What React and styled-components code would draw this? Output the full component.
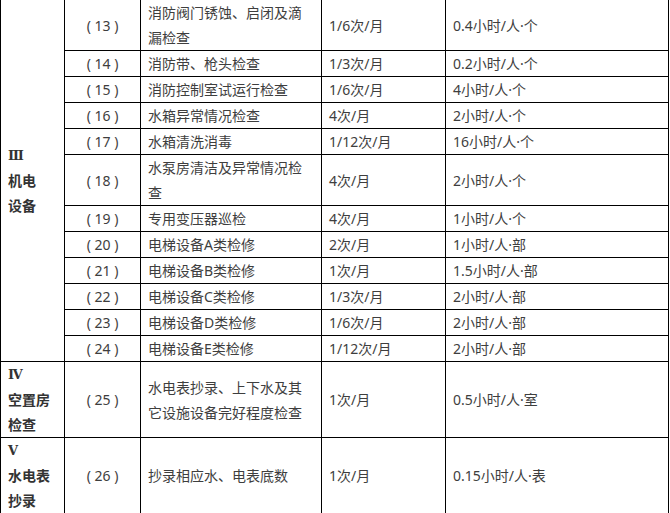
import styled, { createGlobalStyle } from "styled-components";

const GlobalStyle = createGlobalStyle`
  html, body {
    margin: 0;
    padding: 0;
    background: #fff;
  }
  body {
    font-family: "Noto Sans", "Noto Sans CJK SC", sans-serif;
    font-size: 14px;
    color: #3e3e3e;
  }
`;

const groups = [
  {
    title: ["Ⅲ", "机电", "设备"],
    rows: [
      ["13", "消防阀门锈蚀、启闭及滴漏检查", "1/6次/月", "0.4小时/人·个"],
      ["14", "消防带、枪头检查", "1/3次/月", "0.2小时/人·个"],
      ["15", "消防控制室试运行检查", "1/6次/月", "4小时/人·个"],
      ["16", "水箱异常情况检查", "4次/月", "2小时/人·个"],
      ["17", "水箱清洗消毒", "1/12次/月", "16小时/人·个"],
      ["18", "水泵房清洁及异常情况检查", "4次/月", "2小时/人·个"],
      ["19", "专用变压器巡检", "4次/月", "1小时/人·个"],
      ["20", "电梯设备A类检修", "2次/月", "1小时/人·部"],
      ["21", "电梯设备B类检修", "1次/月", "1.5小时/人·部"],
      ["22", "电梯设备C类检修", "1/3次/月", "2小时/人·部"],
      ["23", "电梯设备D类检修", "1/6次/月", "2小时/人·部"],
      ["24", "电梯设备E类检修", "1/12次/月", "2小时/人·部"],
    ],
  },
  {
    title: ["Ⅳ", "空置房", "检查"],
    rows: [["25", "水电表抄录、上下水及其它设施设备完好程度检查", "1次/月", "0.5小时/人·室"]],
  },
  {
    title: ["Ⅴ", "水电表", "抄录"],
    rows: [["26", "抄录相应水、电表底数", "1次/月", "0.15小时/人·表"]],
  },
];

const widths = [64, 76, 181, 124, 223];

function App() {
  return (
    <>
      <GlobalStyle />
      <Sheet>
        <colgroup>
          {widths.map((w, i) => (
            <col key={i} style={{ width: w }} />
          ))}
        </colgroup>
        <tbody>
          {groups.map((g) =>
            g.rows.map((r, i) => (
              <tr key={r[0]}>
                {i === 0 && (
                  <Cell rowSpan={g.rows.length} $bold>
                    <Numeral>{g.title[0]}</Numeral>
                    {g.title.slice(1).map((t) => (
                      <div key={t}>{t}</div>
                    ))}
                  </Cell>
                )}
                <Cell $center>( {r[0]} )</Cell>
                <Cell>{r[1]}</Cell>
                <Cell>{r[2]}</Cell>
                <Cell>{r[3]}</Cell>
              </tr>
            ))
          )}
        </tbody>
      </Sheet>
    </>
  );
}

export default App;

const Sheet = styled.table`
  width: 669px;
  margin-top: -1px;
  border-collapse: collapse;
  table-layout: fixed;
`;

const Cell = styled.td`
  border: 1px solid #000;
  padding: 0 7px;
  line-height: 25px;
  vertical-align: middle;
  text-align: ${(p) => (p.$center ? "center" : "left")};
  font-weight: ${(p) => (p.$bold ? 700 : 400)};
  color: ${(p) => (p.$bold ? "#333" : "#3e3e3e")};
  word-break: break-all;
  white-space: pre-wrap;
`;

const Numeral = styled.div`
  font-family: "DejaVu Serif", "Noto Sans CJK SC", serif;
  font-size: 13px;
`;
